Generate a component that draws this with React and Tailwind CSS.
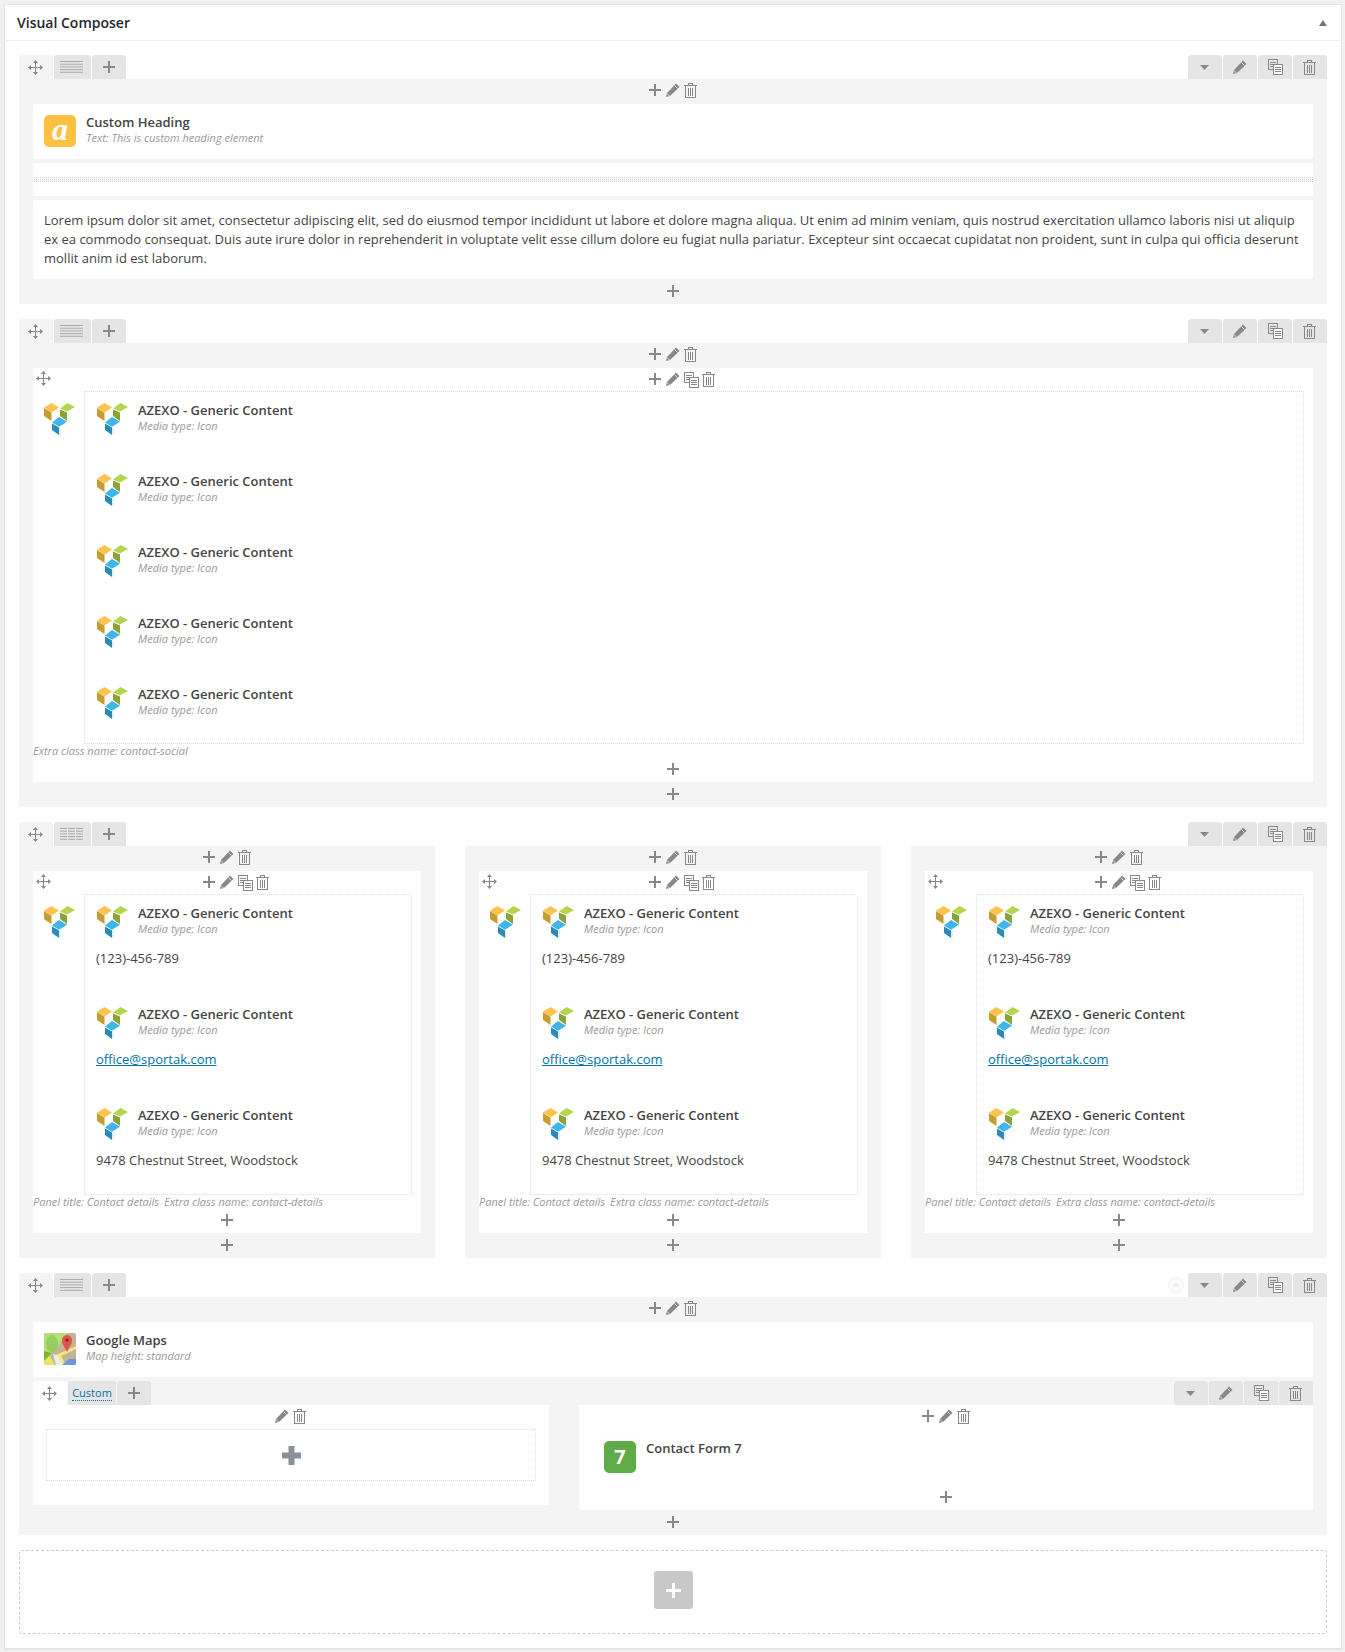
import React from 'react';

const Plus = ({ className = '' }) => (
  <svg width="12" height="12" viewBox="0 0 12 12" className={className}>
    <path d="M5 0h2v5h5v2H7v5H5V7H0V5h5z" fill="#888" />
  </svg>
);

const Pencil = () => (
  <svg width="14" height="14" viewBox="0 0 14 14" className="shrink-0">
    <path d="M0 14l1-4 9-9.500 3.500 3.500-9.500 9z" fill="#888" />
    <path d="M8.500 2.500l3 3M1 10.500l2.500 2.500" stroke="#fff" strokeWidth="0.7" fill="none" />
  </svg>
);

const Trash = () => (
  <svg width="13" height="15" viewBox="0 0 13 15" className="shrink-0" fill="none" stroke="#888" shapeRendering="crispEdges">
    <path d="M4.500 2V.5h4V2M0 2.500h13M1.500 3v11.500h10V3M4.500 5v8M6.500 5v8M8.500 5v8" />
  </svg>
);

const Copy = () => (
  <svg width="15" height="16" viewBox="0 0 15 16" className="shrink-0" fill="none" stroke="#888" shapeRendering="crispEdges">
    <path d="M.5.5h9v10h-9zM2 3.500h6M2 5.500h4M2 7.500h3" />
    <path d="M5.500 5.500h9v10h-9z" fill="#fff" />
    <path d="M7 8.500h6M7 10.500h6M7 12.500h6" />
  </svg>
);

const Move = () => (
  <svg width="15" height="15" viewBox="0 0 15 15" className="shrink-0">
    <path d="M7 2h1v11H7zM2 7h11v1H2z" fill="#888" />
    <path d="M7.500 0l2.500 3H5zM7.500 15L5 12h5zM0 7.500L3 5v5zM15 7.500L12 10V5z" fill="#888" />
  </svg>
);

const LayoutLines = ({ cols }) => (
  <svg width="23" height="12" viewBox="0 0 23 12">
    {[0.5, 3.2, 5.9, 8.6, 11.3].map((y) =>
      cols === 3 ? (
        <path key={y} d={`M0 ${y}h7M8 ${y}h7M16 ${y}h7`} stroke="#aaa" fill="none" />
      ) : (
        <path key={y} d={`M0 ${y}h23`} stroke="#aaa" fill="none" />
      )
    )}
  </svg>
);

const VcLogo = () => (
  <svg width="32" height="32" viewBox="0 0 32 32" className="shrink-0">
    <path d="M0 4.500L7.500 0 15 4.500 7.500 9.500z" fill="#fcc44f" />
    <path d="M0 5l7.500 4.800V18L0 13z" fill="#c69c2d" />
    <path d="M16 5.500L23.500 0l7.500 4-8 4.500z" fill="#b5d44f" />
    <path d="M16 6.500l7 3V18l-7-5z" fill="#8ba238" />
    <path d="M8 19.500l7-5.500 8 4.700-8 5z" fill="#3fb5ea" />
    <path d="M8 20.500l7 4V32l-7-5z" fill="#2a8ab8" />
    <path d="M15.500 24.500l1-.6V31l-1 1z" fill="#bfe3f5" />
  </svg>
);

const MapsIcon = () => (
  <svg width="32" height="32" viewBox="0 0 32 32" className="shrink-0 rounded-[2px]">
    <rect width="32" height="32" fill="#c3b497" />
    <path d="M0 0h24L0 32z" fill="#b6dd7a" />
    <path d="M0 18l8 2-8 8z" fill="#7cb82f" />
    <ellipse cx="8" cy="11" rx="6" ry="9" fill="#93cf62" />
    <path d="M12 22l20-9v3L17 23l5 9h-6z" fill="#f7ea7c" />
    <path d="M9 21l4 1 6 10h-7z" fill="#e9edf0" />
    <path d="M0 32v-4l6-5 5 9z" fill="#eee36a" />
    <path d="M18 32l7-6h7v6z" fill="#6f94d8" />
    <path d="M23 19c-3-6-5-8-5-12a5 5 0 0 1 10 0c0 4-2 6-5 12z" fill="#e0534a" />
    <circle cx="23" cy="7" r="1.500" fill="#7a1f1a" />
  </svg>
);

const AddZone = ({ className = '' }) => (
  <div className={`flex h-[25px] justify-center pt-[6px] ${className}`}>
    <Plus />
  </div>
);

const Controls = ({ copy, plus = true, className = '' }) => (
  <div className={`flex h-[25px] items-start justify-center pt-[4px] ${copy ? 'pl-[18px]' : ''} ${plus ? '' : 'pr-[1px]'} ${className}`}>
    {plus && <Plus className="mt-[1px] mr-[5px]" />}
    <span className="mr-[4px]">
      <Pencil />
    </span>
    {copy && (
      <span className="mr-[3px]">
        <Copy />
      </span>
    )}
    <Trash />
  </div>
);

const Tab = ({ children, active, className = 'w-[34px]' }) => (
  <div className={`flex h-[24px] items-center justify-center rounded-t-[3px] ${active ? '' : 'bg-[#e5e5e5]'} ${className}`}>
    {children}
  </div>
);

const TabBar = ({ left, activeBg, spinner }) => (
  <div className="flex h-[24px] justify-between">
    <div className="flex gap-[1px]">
      <Tab active className={`w-[34px] pr-[1px] ${activeBg}`}>
        <Move />
      </Tab>
      {left}
      <Tab>
        <Plus />
      </Tab>
    </div>
    <div className="flex items-center gap-[1px]">
      {spinner && (
        <svg width="16" height="16" viewBox="0 0 16 16" className="mr-[3px]">
          <circle cx="8" cy="8" r="7.500" fill="#fafafa" stroke="#f2f2f2" />
          <path d="M8 5l3 2-1 3H6L5 7z" fill="#f0f0f0" />
        </svg>
      )}
      <Tab className="w-[34px] pr-[1px]">
        <svg width="9" height="5" viewBox="0 0 9 5">
          <path d="M0 0h9L4.500 5z" fill="#888" />
        </svg>
      </Tab>
      <Tab>
        <Pencil />
      </Tab>
      <Tab className="w-[34px] pl-[1px]">
        <Copy />
      </Tab>
      <Tab className="w-[34px] pr-[1px]">
        <Trash />
      </Tab>
    </div>
  </div>
);

const Row = ({ cols = 1, spinner, children }) => (
  <section className="mb-[15px]">
    <TabBar
      activeBg="bg-[#f4f4f4]"
      spinner={spinner}
      left={
        <Tab className="w-[37px] pr-[2px]">
          <LayoutLines cols={cols} />
        </Tab>
      }
    />
    {children}
  </section>
);

const Heading = ({ title, sub, icon }) => (
  <div className="flex gap-[10px]">
    {icon}
    <div className="-mt-[2px]">
      <div className="text-[13px] leading-[19px] font-semibold text-[#444]">{title}</div>
      {sub && <div className="-mt-[2px] text-[11px] leading-[15px] text-[#999] italic">{sub}</div>}
    </div>
  </div>
);

const Element = ({ children, className = '' }) => (
  <div className={`rounded-[2px] bg-white ${className}`}>{children}</div>
);

const ContentItem = ({ text, link }) => (
  <div className="px-[11px] pt-[11px] pb-[28px] last:pb-[24px]">
    <Heading
      title="AZEXO - Generic Content"
      sub="Media type: Icon"
      icon={
        <span className="-mr-[1px] ml-[1px]">
          <VcLogo />
        </span>
      }
    />
    {text && (
      <div className="mt-[11px] text-[13px] leading-[19px] text-[#444]">
        {link ? (
          <a href="#" className="text-[#0073aa] underline">
            {text}
          </a>
        ) : (
          text
        )}
      </div>
    )}
  </div>
);

const Panel = ({ caption, children }) => (
  <div className="bg-white">
    <div className="grid h-[23px] grid-cols-[1fr_auto_1fr]">
      <div className="pt-[3px] pl-[3px]">
        <Move />
      </div>
      <Controls copy className="!h-[23px]" />
    </div>
    <div className="flex">
      <div className="w-[51px] shrink-0 pt-[12px] pl-[11px]">
        <VcLogo />
      </div>
      <div className="mr-[9px] min-w-0 flex-1 border border-dotted border-[#ddd]">{children}</div>
    </div>
    <div className="flex h-[15px] gap-[5px] text-[11px] leading-[13px] text-[#999] italic">{caption}</div>
    <div className="flex h-[23px] justify-center pt-[4px]">
      <Plus />
    </div>
  </div>
);

const ContactColumn = () => (
  <div className="bg-[#f4f4f4] px-[14px]">
    <Controls />
    <Panel
      caption={
        <>
          <span>Panel title: Contact details</span>
          <span>Extra class name: contact-details</span>
        </>
      }
    >
      <ContentItem text="(123)-456-789" />
      <ContentItem text="office@sportak.com" link />
      <ContentItem text="9478 Chestnut Street, Woodstock" />
    </Panel>
    <AddZone />
  </div>
);

export default function App() {
  return (
    <div className="min-h-[1652px] bg-[#f1f1f1] pt-[4px] pr-[3px] pl-[4px] font-['Open_Sans',sans-serif]">
      <div className="border border-[#e5e5e5] bg-white shadow-[0_1px_1px_rgba(0,0,0,0.04)]">
        <div className="flex h-[36px] items-center justify-between border-b border-[#eee] pr-[14px] pl-[12px]">
          <h2 className="text-[14px] font-semibold text-[#23282d]">Visual Composer</h2>
          <svg width="8" height="6" viewBox="0 0 8 6">
            <path d="M4 0l4 6H0z" fill="#72777c" />
          </svg>
        </div>

        <div className="px-[14px] pt-[14px] pb-[14px]">
          <Row>
            <div className="bg-[#f4f4f4] px-[14px]">
              <Controls />
              <Element className="h-[55px] p-[11px]">
                <Heading
                  title="Custom Heading"
                  sub="Text: This is custom heading element"
                  icon={
                    <div className="flex h-[32px] w-[32px] shrink-0 items-center justify-center rounded-[5px] bg-[#fdc142] pb-[5px] font-['Liberation_Serif',serif] text-[32px] leading-none font-bold text-white italic">
                      a
                    </div>
                  }
                />
              </Element>
              <Element className="mt-[4px] h-[33px] pt-[14px]">
                <div className="h-[5px] bg-[conic-gradient(#ccc_25%,transparent_0)] bg-[length:2px_2px]"></div>
              </Element>
              <Element className="mt-[4px] h-[79px] px-[11px] py-[11px] text-[13px] leading-[19px] text-[#444]">
                Lorem ipsum dolor sit amet, consectetur adipiscing elit, sed do eiusmod tempor incididunt ut labore et dolore magna aliqua. Ut enim ad minim veniam, quis nostrud exercitation ullamco laboris nisi ut aliquip ex ea commodo consequat. Duis aute irure dolor in reprehenderit in voluptate velit esse cillum dolore eu fugiat nulla pariatur. Excepteur sint occaecat cupidatat non proident, sunt in culpa qui officia deserunt mollit anim id est laborum.
              </Element>
              <AddZone />
            </div>
          </Row>

          <Row>
            <div className="bg-[#f4f4f4] px-[14px]">
              <Controls />
              <Panel caption={<span>Extra class name: contact-social</span>}>
                <ContentItem />
                <ContentItem />
                <ContentItem />
                <ContentItem />
                <ContentItem />
              </Panel>
              <AddZone />
            </div>
          </Row>

          <Row cols={3}>
            <div className="grid grid-cols-3 gap-[30px]">
              <ContactColumn />
              <ContactColumn />
              <ContactColumn />
            </div>
          </Row>

          <Row spinner>
            <div className="bg-[#f4f4f4] px-[14px]">
              <Controls />
              <Element className="h-[55px] p-[11px]">
                <Heading title="Google Maps" sub="Map height: standard" icon={<MapsIcon />} />
              </Element>
              <div className="mt-[4px]">
                <TabBar
                  activeBg="bg-white"
                  left={
                    <Tab className="w-[48px]">
                      <a href="#" className="border-b border-dotted border-[#0073aa] text-[11px] leading-[14px] text-[#0073aa]">
                        Custom
                      </a>
                    </Tab>
                  }
                />
                <div className="flex items-start gap-[30px]">
                  <div className="h-[100px] w-[516px] shrink-0 bg-white px-[13px]">
                    <Controls plus={false} className="!h-[24px]" />
                    <div className="flex h-[52px] items-center justify-center border border-dotted border-[#ddd]">
                      <svg width="19" height="19" viewBox="0 0 19 19">
                        <path d="M6.500 0h6v6.500H19v6h-6.500V19h-6v-6.500H0v-6h6.500z" fill="#8a9197" />
                      </svg>
                    </div>
                  </div>
                  <div className="h-[105px] flex-1 bg-white">
                    <Controls className="!h-[24px]" />
                    <div className="h-[50px] pt-[12px] pl-[25px]">
                      <div className="flex gap-[10px]">
                        <div className="flex h-[32px] w-[32px] shrink-0 items-center justify-center rounded-[5px] bg-[#5fab47] text-[20px] leading-none font-bold text-white">
                          7
                        </div>
                        <div className="-mt-[2px] text-[13px] leading-[19px] font-semibold text-[#444]">Contact Form 7</div>
                      </div>
                    </div>
                    <div className="flex justify-center pt-[12px]">
                      <Plus />
                    </div>
                  </div>
                </div>
              </div>
              <AddZone />
            </div>
          </Row>

          <div className="flex h-[84px] items-center justify-center rounded-[2px] border border-dashed border-[#ccc] pb-[4px]">
            <div className="flex h-[38px] w-[39px] items-center justify-center rounded-[3px] bg-[#c8c8c8]">
              <svg width="15" height="15" viewBox="0 0 15 15">
                <path d="M6 0h3v6h6v3H9v6H6V9H0V6h6z" fill="#fff" />
              </svg>
            </div>
          </div>
        </div>
      </div>
    </div>
  );
}
